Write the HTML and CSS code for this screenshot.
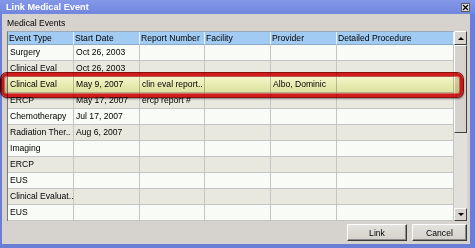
FILE: index.html
```html
<!DOCTYPE html>
<html lang="en">
  <head>
    <meta charset="UTF-8" />
    <title>Link Medical Event</title>
    <link rel="stylesheet" href="styles.css">
  </head>
  <body>
    <div class="window">
      <header class="titlebar">
        <span class="title">Link Medical Event</span>
        <span class="close">
          <svg width="7" height="7" viewBox="0 0 7 7"><path d="M1 1 L6 6 M6 1 L1 6" stroke="#000" stroke-width="1.3"/></svg>
        </span>
      </header>
      <main class="content">
        <div class="label">Medical Events</div>
        <div class="table-wrap">
          <div class="grid">
            <div class="row head">
              <div class="cell">Event Type</div>
              <div class="cell">Start Date</div>
              <div class="cell">Report Number</div>
              <div class="cell">Facility</div>
              <div class="cell">Provider</div>
              <div class="cell">Detailed Procedure</div>
            </div>
            <div class="row">
              <div class="cell">Surgery</div><div class="cell">Oct 26, 2003</div><div class="cell"></div><div class="cell"></div><div class="cell"></div><div class="cell"></div>
            </div>
            <div class="row alt">
              <div class="cell">Clinical Eval</div><div class="cell">Oct 26, 2003</div><div class="cell"></div><div class="cell"></div><div class="cell"></div><div class="cell"></div>
            </div>
            <div class="row">
              <div class="cell">Clinical Eval</div><div class="cell">May 9, 2007</div><div class="cell">clin eval report..</div><div class="cell"></div><div class="cell">Albo, Dominic</div><div class="cell"></div>
            </div>
            <div class="row alt">
              <div class="cell">ERCP</div><div class="cell">May 17, 2007</div><div class="cell">ercp report #</div><div class="cell"></div><div class="cell"></div><div class="cell"></div>
            </div>
            <div class="row">
              <div class="cell">Chemotherapy</div><div class="cell">Jul 17, 2007</div><div class="cell"></div><div class="cell"></div><div class="cell"></div><div class="cell"></div>
            </div>
            <div class="row alt">
              <div class="cell">Radiation Ther..</div><div class="cell">Aug 6, 2007</div><div class="cell"></div><div class="cell"></div><div class="cell"></div><div class="cell"></div>
            </div>
            <div class="row">
              <div class="cell">Imaging</div><div class="cell"></div><div class="cell"></div><div class="cell"></div><div class="cell"></div><div class="cell"></div>
            </div>
            <div class="row alt">
              <div class="cell">ERCP</div><div class="cell"></div><div class="cell"></div><div class="cell"></div><div class="cell"></div><div class="cell"></div>
            </div>
            <div class="row">
              <div class="cell">EUS</div><div class="cell"></div><div class="cell"></div><div class="cell"></div><div class="cell"></div><div class="cell"></div>
            </div>
            <div class="row alt">
              <div class="cell">Clinical Evaluat..</div><div class="cell"></div><div class="cell"></div><div class="cell"></div><div class="cell"></div><div class="cell"></div>
            </div>
            <div class="row">
              <div class="cell">EUS</div><div class="cell"></div><div class="cell"></div><div class="cell"></div><div class="cell"></div><div class="cell"></div>
            </div>
          </div>
          <div class="scrollbar">
            <div class="sb-btn"><span class="arrow up"></span></div>
            <div class="sb-thumb"></div>
            <div class="sb-track"></div>
            <div class="sb-btn"><span class="arrow down"></span></div>
          </div>
        </div>
        <div class="buttons">
          <button class="btn btn-link">Link</button>
          <button class="btn btn-cancel">Cancel</button>
        </div>
      </main>
      <!-- red marker round the selected row -->
      <div class="highlight"></div>
    </div>
  </body>
</html>
```

FILE: styles.css
```css
* {
  margin: 0;
  padding: 0;
  box-sizing: border-box;
}

body {
  width: 475px;
  height: 248px;
  overflow: hidden;
  background: #6a7ed8;
  font-family: "Liberation Sans", Arial, sans-serif;
  font-size: 8.6px;
  color: #000;
}

.window {
  position: relative;
  display: flex;
  flex-direction: column;
  height: 248px;
  background: #6a7ed8;
}

.titlebar {
  height: 14px;
  display: flex;
  align-items: center;
  justify-content: space-between;
  padding: 0 5px 0 6px;
  background: linear-gradient(#8498e8, #7086de);
}

.title {
  color: #fff;
  font-weight: bold;
  font-size: 9.2px;
  line-height: 14px;
}

.close {
  width: 9px;
  height: 9px;
  display: flex;
  align-items: center;
  justify-content: center;
  background: #e4e2dc;
  border: 1px solid #5a5a5a;
  margin-top: 1px;
}

.content {
  flex-grow: 1;
  margin: 0 5px 4px 2px;
  padding: 3px 1px 0 5px;
  background: #d6d3ce;
}

.label {
  height: 14px;
  line-height: 13px;
}

.table-wrap {
  display: flex;
  height: 190px;
  width: 460px;
  overflow: hidden;
}

.grid {
  width: 447px;
  border-left: 1px solid #7a7a7a;
  border-top: 1px solid #9aa8b8;
  background: #f8fbf6;
}

.row {
  display: grid;
  grid-template-columns: 66px 66px 65px 66px 66px 117px;
  height: 16px;
  background: #f8fbf6;
}

.row.alt {
  background: #e8e8df;
}

.cell {
  border-right: 1px solid #c4c4c4;
  border-bottom: 1px solid #c4c4c4;
  padding-left: 2px;
  line-height: 15px;
  white-space: nowrap;
  overflow: hidden;
}

.row.head {
  height: 13px;
  background: #a2cbf4;
}

.row.head .cell {
  line-height: 12px;
  border-right: 1px solid #e8f2fc;
  border-bottom: 1px solid #8aa8c8;
  padding-left: 1px;
}

.scrollbar {
  width: 13px;
  display: flex;
  flex-direction: column;
  background: #e2e0da;
}

.sb-btn {
  height: 14px;
  display: flex;
  align-items: center;
  justify-content: center;
  background: #d8d5d0;
  border: 1px solid;
  border-color: #fff #404040 #404040 #fff;
}

.sb-btn:last-child {
  height: 13px;
}

.arrow {
  width: 0;
  height: 0;
  border-left: 3px solid transparent;
  border-right: 3px solid transparent;
}

.arrow.up {
  border-bottom: 3px solid #000;
}

.arrow.down {
  border-top: 3px solid #000;
}

.sb-thumb {
  height: 88px;
  background: #d6d3ce;
  border: 1px solid;
  border-color: #fff #404040 #404040 #fff;
}

.sb-track {
  flex-grow: 1;
}

.buttons {
  display: flex;
  justify-content: flex-end;
  gap: 5px;
  margin-top: 3px;
  width: 460px;
}

.btn {
  height: 17px;
  font-family: inherit;
  font-size: 8.6px;
  color: #000;
  background: linear-gradient(#e4e2dc, #d4d1cb);
  border: 1px solid;
  border-color: #fff #3a3a3a #3a3a3a #fff;
  box-shadow: inset -1px -1px 0 #8a8a8a;
}

.btn-link {
  width: 60px;
}

.btn-cancel {
  width: 55px;
}

.highlight {
  position: absolute;
  left: 1px;
  top: 73px;
  width: 462px;
  height: 24px;
  border: 3px solid #e51f1f;
  border-radius: 6px;
  background: linear-gradient(#fbfbd4, #eeeeb4 55%, #e2e2a6);
  mix-blend-mode: multiply;
  box-shadow: 0 0 0 1px #9a1010, 1px 2px 2px rgba(0, 0, 0, 0.45), inset 0 0 0 1px #f07070;
}
```
